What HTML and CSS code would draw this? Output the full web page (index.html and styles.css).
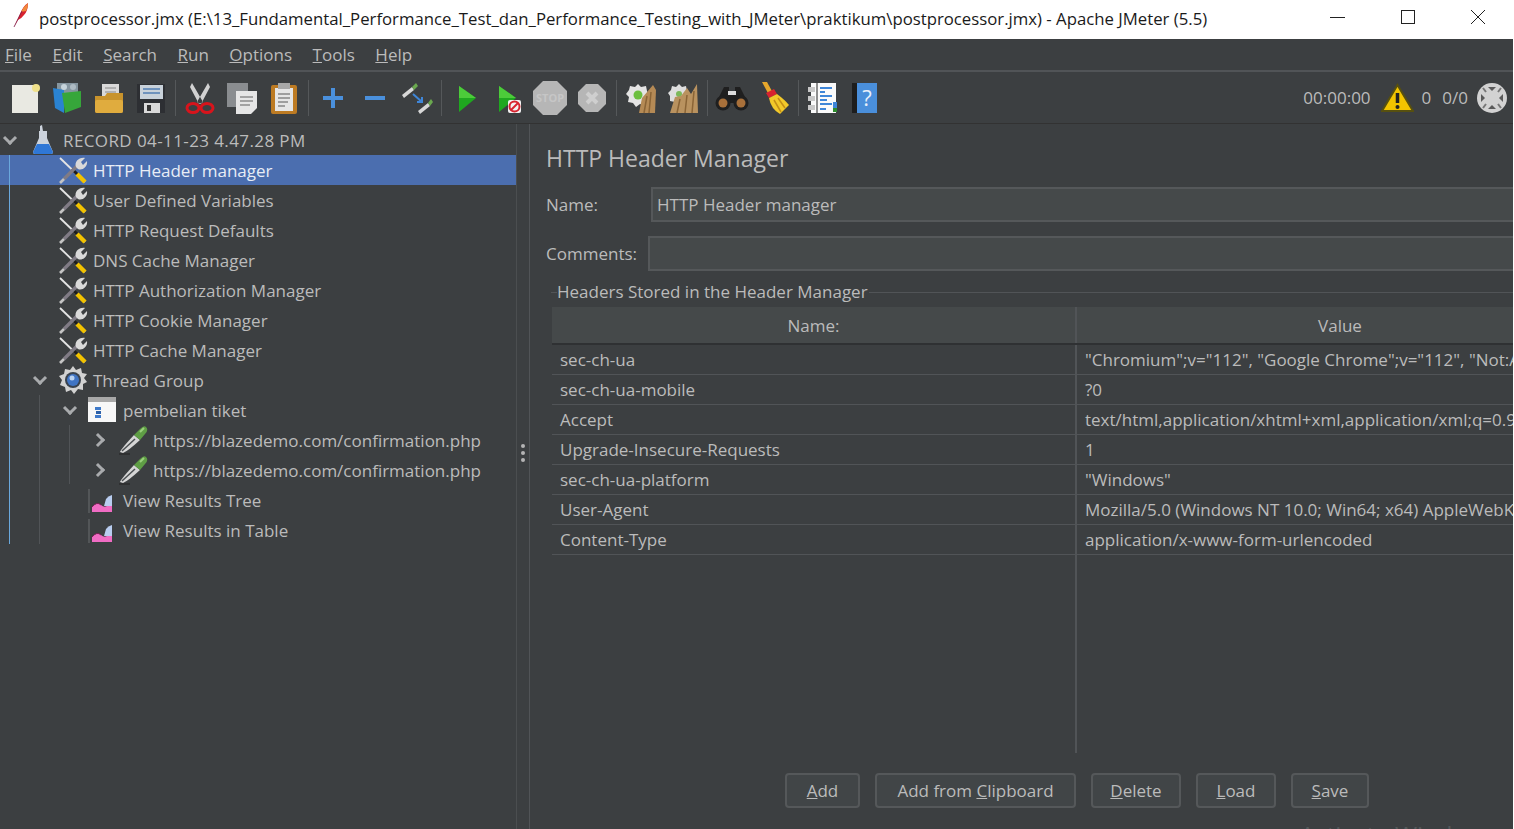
FILE: index.html
```html
<!DOCTYPE html>
<html lang="en">
<head>
  <meta charset="UTF-8" />
  <title>Apache JMeter (5.5)</title>
  <link rel="stylesheet" href="styles.css">
</head>
<body>
  <svg class="defs" width="0" height="0">
    <defs>
      <symbol id="i-tools" viewBox="0 0 30 30">
        <path d="M2 3 L27 27" stroke="#e4e4e4" stroke-width="1.800" fill="none"/>
        <path d="M14 14 L20 20" stroke="#1d1d1d" stroke-width="3" fill="none"/>
        <path d="M19 19 L27 27" stroke="#f2c200" stroke-width="4.500" fill="none"/>
        <path d="M6 24 L20 10" stroke="#807b85" stroke-width="3.400" fill="none"/>
        <path d="M2 28 L6 24" stroke="#c4c4c4" stroke-width="2.600" fill="none"/>
        <path d="M18 12 C16 7 21 2 27 3 L23 7 L25 10 L29 6 C30 12 24 16 20 14 Z" fill="#d9d9d9"/>
      </symbol>
      <symbol id="i-flask" viewBox="0 0 30 30">
        <path d="M12 1 L14 0 L15 6 L19 6 L19 13 L25 27 Q25 29 23 29 L7 29 Q5 29 5 27 L11 13 L11 6 L12 6 Z" fill="#ccd3dc"/>
        <path d="M9 19 L21 19 L25 27 Q25 29 23 29 L7 29 Q5 29 5 27 Z" fill="#2f77d6"/>
      </symbol>
      <symbol id="i-gear" viewBox="0 0 30 30">
        <path d="M15 1 L18 5 L23 3 L24 8 L29 9 L26 13 L29 17 L25 19 L25 25 L20 24 L16 29 L13 25 L8 27 L7 22 L2 20 L4 15 L1 11 L6 9 L7 4 L12 5 Z" fill="#d2d2d2"/>
        <circle cx="15" cy="15" r="8" fill="#39424e"/>
        <circle cx="15" cy="15" r="6" fill="#3f74c4"/>
        <circle cx="14" cy="13" r="2.500" fill="#b9d2f2"/>
      </symbol>
      <symbol id="i-fragment" viewBox="0 0 30 30">
        <rect x="0" y="2" width="28" height="25" fill="#f7f7f7"/>
        <rect x="0" y="2" width="28" height="5" fill="#a8a8a8"/>
        <rect x="7" y="12" width="6" height="3" fill="#3e79c9"/>
        <rect x="8" y="16" width="5" height="3" fill="#2b5fa8"/>
        <rect x="7" y="20" width="6" height="3" fill="#3e79c9"/>
      </symbol>
      <symbol id="i-pipette" viewBox="0 0 30 30">
        <path d="M2 27 Q3 24 16 10 L22 15 Q10 26 5 28 Z" fill="#d6d6d6"/>
        <path d="M4 26 L17 14" stroke="#4b4f52" stroke-width="1.500"/>
        <path d="M16 10 L22 4 Q26 0 28 2 Q31 5 27 9 L22 15 Z" fill="#5f9e45"/>
        <path d="M22 7 L26 3" stroke="#9bd07d" stroke-width="2"/>
        <path d="M1 29 L12 29" stroke="#222" stroke-width="1"/>
      </symbol>
      <symbol id="i-graph" viewBox="0 0 30 30">
        <path d="M1 4 L1 28" stroke="#6b6e70" stroke-width="1"/>
        <path d="M4 27 L4 22 Q9 16 13 20 Q16 23 19 21 L24 20 L24 27 Z" fill="#f06cc4"/>
        <path d="M16 21 L18 14 Q20 11 24 10 L24 21 Z" fill="#b9cdf0"/>
        <path d="M4 22 Q9 16 13 20" stroke="#7a1f55" stroke-width="1" fill="none"/>
      </symbol>
    </defs>
  </svg>

  <div class="app">
    <div class="titlebar">
      <svg class="feather" width="16" height="26" viewBox="0 0 16 26">
        <path d="M1 25 L7 12 Q10 4 15 1 Q15 9 11 13 Q8 17 5 18 Z" fill="#d8232f"/>
        <path d="M8 10 Q11 4 15 1 Q15 6 13 9 Z" fill="#f08a3c"/>
        <path d="M1 25 L9 9" stroke="#7a1a4a" stroke-width="0.800"/>
      </svg>
      <span class="title">postprocessor.jmx (E:\13_Fundamental_Performance_Test_dan_Performance_Testing_with_JMeter\praktikum\postprocessor.jmx) - Apache JMeter (5.5)</span>
      <div class="winbtns">
        <svg width="16" height="16" viewBox="0 0 16 16"><path d="M0 8.500 H15" stroke="#222" stroke-width="1"/></svg>
        <svg width="16" height="16" viewBox="0 0 16 16"><rect x="1.500" y="1.500" width="13" height="13" fill="none" stroke="#222"/></svg>
        <svg width="16" height="16" viewBox="0 0 16 16"><path d="M1 1 L15 15 M15 1 L1 15" stroke="#222" fill="none"/></svg>
      </div>
    </div>

    <nav class="menubar">
      <span><u>F</u>ile</span>
      <span><u>E</u>dit</span>
      <span><u>S</u>earch</span>
      <span><u>R</u>un</span>
      <span><u>O</u>ptions</span>
      <span><u>T</u>ools</span>
      <span><u>H</u>elp</span>
    </nav>

    <div class="toolbar">
      <div class="tool"><svg width="32" height="32" viewBox="0 0 32 32"><rect x="3" y="3" width="26" height="28" fill="#e9e9e2"/><circle cx="27" cy="6" r="4" fill="#efe08a"/></svg></div>
      <div class="tool"><svg width="32" height="32" viewBox="0 0 32 32"><rect x="6" y="1" width="21" height="13" fill="#85959f"/><path d="M2 6 L13 8 L13 31 L4 26 Z" fill="#2a83d2"/><path d="M11 11 L30 9 L30 25 L14 31 Z" fill="#36a63a"/><circle cx="13" cy="5" r="3" fill="#c6d3da"/><circle cx="22" cy="5" r="3" fill="#aebbc3"/></svg></div>
      <div class="tool"><svg width="32" height="32" viewBox="0 0 32 32"><rect x="9" y="2" width="17" height="16" fill="#d9d9d9"/><path d="M12 6 H23 M12 10 H23" stroke="#888"/><path d="M2 14 L12 14 L14 11 L30 11 L30 29 Q30 31 28 31 L4 31 Q2 31 2 29 Z" fill="#c8932c"/><rect x="2" y="18" width="28" height="13" rx="2" fill="#e0ac3e"/></svg></div>
      <div class="tool"><svg width="32" height="32" viewBox="0 0 32 32"><path d="M2 2 H30 V31 H2 Z" fill="#2d2f33"/><rect x="5" y="3" width="23" height="14" fill="#c9d2da"/><path d="M8 7 H25 M8 11 H25" stroke="#6f93bd" stroke-width="2"/><rect x="9" y="21" width="16" height="10" fill="#d9d9d9"/><rect x="12" y="23" width="4" height="6" fill="#333"/></svg></div>
      <i class="sep"></i>
      <div class="tool"><svg width="32" height="32" viewBox="0 0 32 32"><path d="M8 1 L19 20 L15 22 L6 5 Z M24 1 L13 20 L17 22 L26 5 Z" fill="#d2d2d2"/><ellipse cx="9" cy="26" rx="6" ry="4.500" fill="none" stroke="#d8141c" stroke-width="3"/><ellipse cx="23" cy="26" rx="6" ry="4.500" fill="none" stroke="#d8141c" stroke-width="3"/></svg></div>
      <div class="tool"><svg width="32" height="32" viewBox="0 0 32 32"><rect x="1" y="1" width="21" height="24" fill="#8a8d90"/><path d="M10 9 H31 V26 L25 32 H10 Z" fill="#e6e6e6"/><path d="M14 15 H27 M14 19 H27 M14 23 H24" stroke="#8d8d8d" stroke-width="1.500"/></svg></div>
      <div class="tool"><svg width="32" height="32" viewBox="0 0 32 32"><rect x="3" y="3" width="26" height="29" rx="2" fill="#bd7b23"/><rect x="7" y="6" width="18" height="23" fill="#e6e6e6"/><rect x="10" y="1" width="12" height="6" fill="#a8a8a8"/><path d="M10 12 H22 M10 16 H22 M10 20 H20 M10 24 H17" stroke="#888" stroke-width="1.500"/></svg></div>
      <i class="sep"></i>
      <div class="tool"><svg width="24" height="24" viewBox="0 0 24 24"><path d="M12 2 V22 M2 12 H22" stroke="#4a90dc" stroke-width="4"/></svg></div>
      <div class="tool"><svg width="24" height="24" viewBox="0 0 24 24"><path d="M2 12 H22" stroke="#4a90dc" stroke-width="4"/></svg></div>
      <div class="tool"><svg width="32" height="32" viewBox="0 0 32 32"><path d="M1 13 L11 5 L13 8 L3 16 Z" fill="#d8d8d8"/><path d="M11 5 L15 1 L17 4 L13 8 Z" fill="#6aa84f"/><path d="M17 29 L27 21 L29 24 L19 32 Z" fill="#d8d8d8"/><path d="M27 21 L30 17 L32 20 L29 24 Z" fill="#6aa84f"/><path d="M12 12 L21 20 M21 15 V20 H16" stroke="#3f86d8" stroke-width="2" fill="none"/></svg></div>
      <i class="sep"></i>
      <div class="tool"><svg width="32" height="32" viewBox="0 0 32 32"><path d="M9 4 L26 16 L9 30 Z" fill="#1fa81f"/><path d="M9 4 L26 16 L9 16 Z" fill="#4ccb3a"/></svg></div>
      <div class="tool"><svg width="32" height="32" viewBox="0 0 32 32"><path d="M7 4 L24 16 L7 30 Z" fill="#1fa81f"/><path d="M7 4 L24 16 L7 16 Z" fill="#4ccb3a"/><rect x="16" y="18" width="13" height="13" rx="2" fill="#f2f2f2"/><circle cx="22.500" cy="24.500" r="5" fill="none" stroke="#d8232f" stroke-width="2"/><path d="M19 28 L26 21" stroke="#d8232f" stroke-width="2"/></svg></div>
      <div class="tool"><svg class="stopsign" width="34" height="34" viewBox="0 0 34 34"><path d="M10 0 H24 L34 10 V24 L24 34 H10 L0 24 V10 Z" fill="#b6b6b6"/><text x="17" y="21" class="stoptext">STOP</text></svg></div>
      <div class="tool"><svg width="28" height="28" viewBox="0 0 28 28"><path d="M8 0 H20 L28 8 V20 L20 28 H8 L0 20 V8 Z" fill="#b6b6b6"/><path d="M9 9 L19 19 M19 9 L9 19" stroke="#cfcfcf" stroke-width="4"/></svg></div>
      <i class="sep"></i>
      <div class="tool"><svg width="32" height="32" viewBox="0 0 32 32"><path d="M13 2 L16 5 L21 4 L22 9 L24 14 L21 18 L20 23 L15 22 L11 25 L8 21 L3 20 L4 15 L1 12 L4 8 L5 4 L10 5 Z" fill="#e4e4e4"/><circle cx="13" cy="13" r="4.500" fill="#6cbf3f"/><path d="M14 31 L17 16 L28 3 L31 8 L30 31 Z" fill="#b58a55"/><path d="M19 31 L22 14 M24 31 L26 10" stroke="#8a6436" stroke-width="1.500"/></svg></div>
      <div class="tool"><svg width="32" height="32" viewBox="0 0 32 32"><path d="M12 2 L15 5 L19 4 L20 9 L22 13 L19 17 L8 20 L3 19 L3 14 L1 11 L4 8 L5 4 L9 5 Z" fill="#dedede"/><circle cx="12" cy="12" r="3" fill="#7cb85a"/><path d="M3 31 L8 15 L14 14 L20 6 L24 12 L30 2 L31 31 Z" fill="#b9925f"/><path d="M10 31 L13 17 M18 31 L20 13 M25 31 L27 9" stroke="#8a6436" stroke-width="1.500"/></svg></div>
      <i class="sep"></i>
      <div class="tool"><svg width="34" height="28" viewBox="0 0 34 28"><path d="M9 3 H14 V10 H20 V3 H25 L33 19 H1 Z" fill="#1f1f1f"/><circle cx="8" cy="19" r="7.500" fill="#1f1f1f"/><circle cx="26" cy="19" r="7.500" fill="#1f1f1f"/><circle cx="8" cy="19" r="4.500" fill="#a8703a"/><circle cx="26" cy="19" r="4.500" fill="#a8703a"/><rect x="13" y="7" width="8" height="4" fill="#ddd"/></svg></div>
      <div class="tool"><svg width="32" height="34" viewBox="0 0 32 34"><path d="M4 1 L9 1 L15 12 L11 14 Z" fill="#e6a72c"/><path d="M8 12 L16 8 L19 13 L11 17 Z" fill="#d8232f"/><path d="M11 17 L19 13 Q27 19 31 24 L22 33 Q13 28 11 17 Z" fill="#f2c92a"/><path d="M16 19 L23 31 M20 17 L27 27" stroke="#c48f16" stroke-width="1.500"/></svg></div>
      <i class="sep"></i>
      <div class="tool"><svg width="32" height="32" viewBox="0 0 32 32"><rect x="4" y="1" width="25" height="30" fill="#fafafa"/><rect x="26" y="20" width="4" height="6" fill="#3f86d8"/><rect x="26" y="26" width="4" height="4" fill="#2e8c2e"/><path d="M10 1 V31" stroke="#222"/><path d="M13 6 H25 M13 10 H18 M13 14 H25 M13 18 H20 M13 22 H25 M13 27 H19" stroke="#3f86d8" stroke-width="2"/><rect x="1" y="5" width="7" height="5" fill="#c8c8c8"/><rect x="1" y="14" width="7" height="5" fill="#c8c8c8"/><rect x="1" y="23" width="7" height="5" fill="#c8c8c8"/></svg></div>
      <div class="tool"><svg class="helpbook" width="26" height="32" viewBox="0 0 26 32"><rect x="0" y="1" width="6" height="30" fill="#1d1d1d"/><rect x="5" y="1" width="20" height="30" fill="#4a8fdb"/><text x="15" y="24" class="helptext">?</text></svg></div>
      <div class="status">
        <span class="timer">00:00:00</span>
        <svg class="warn" width="33" height="30" viewBox="0 0 33 30"><path d="M16.500 2 L32 28 H1 Z" fill="#f2c400" stroke="#57500f" stroke-width="2"/><path d="M16.500 10 V20" stroke="#222" stroke-width="3.500"/><circle cx="16.500" cy="24" r="2" fill="#222"/></svg>
        <span class="warncount">0</span>
        <span class="threads">0/0</span>
        <svg class="lf" width="32" height="32" viewBox="0 0 32 32"><circle cx="16" cy="16" r="15" fill="#d2d2d2"/><path d="M16 9 L12 5 H20 Z M16 23 L12 27 H20 Z M9 16 L5 12 V20 Z M23 16 L27 12 V20 Z" fill="#5a5a5a"/><path d="M10 10 L7 6 M22 10 L25 6 M10 22 L7 26 M22 22 L25 26" stroke="#777" stroke-width="2"/></svg>
      </div>
    </div>

    <main class="main">
      <aside class="tree">
        <i class="guide guide-root"></i>
        <i class="guide guide-thread"></i>
        <i class="guide guide-frag"></i>
        <div class="row"><b class="arrow open"></b><svg class="nodeicon"><use href="#i-flask"/></svg><span class="plan-name">RECORD 04-11-23 4.47.28 PM</span></div>
        <div class="row lv1 selected"><b class="arrow none"></b><svg class="nodeicon"><use href="#i-tools"/></svg><span>HTTP Header manager</span></div>
        <div class="row lv1"><b class="arrow none"></b><svg class="nodeicon"><use href="#i-tools"/></svg><span>User Defined Variables</span></div>
        <div class="row lv1"><b class="arrow none"></b><svg class="nodeicon"><use href="#i-tools"/></svg><span>HTTP Request Defaults</span></div>
        <div class="row lv1"><b class="arrow none"></b><svg class="nodeicon"><use href="#i-tools"/></svg><span>DNS Cache Manager</span></div>
        <div class="row lv1"><b class="arrow none"></b><svg class="nodeicon"><use href="#i-tools"/></svg><span>HTTP Authorization Manager</span></div>
        <div class="row lv1"><b class="arrow none"></b><svg class="nodeicon"><use href="#i-tools"/></svg><span>HTTP Cookie Manager</span></div>
        <div class="row lv1"><b class="arrow none"></b><svg class="nodeicon"><use href="#i-tools"/></svg><span>HTTP Cache Manager</span></div>
        <div class="row lv1"><b class="arrow open"></b><svg class="nodeicon"><use href="#i-gear"/></svg><span>Thread Group</span></div>
        <div class="row lv2"><b class="arrow open"></b><svg class="nodeicon"><use href="#i-fragment"/></svg><span>pembelian tiket</span></div>
        <div class="row lv3"><b class="arrow closed"></b><svg class="nodeicon"><use href="#i-pipette"/></svg><span>https://blazedemo.com/confirmation.php</span></div>
        <div class="row lv3"><b class="arrow closed"></b><svg class="nodeicon"><use href="#i-pipette"/></svg><span>https://blazedemo.com/confirmation.php</span></div>
        <div class="row lv2"><b class="arrow none"></b><svg class="nodeicon"><use href="#i-graph"/></svg><span>View Results Tree</span></div>
        <div class="row lv2"><b class="arrow none"></b><svg class="nodeicon"><use href="#i-graph"/></svg><span>View Results in Table</span></div>
      </aside>

      <div class="divider"><i></i><i></i><i></i></div>

      <section class="panel">
        <h2>HTTP Header Manager</h2>
        <div class="field name-field">
          <label>Name:</label>
          <div class="input">HTTP Header manager</div>
        </div>
        <div class="field comments-field">
          <label>Comments:</label>
          <div class="input"></div>
        </div>
        <div class="legend"><span>Headers Stored in the Header Manager</span></div>
        <div class="table">
          <div class="thead">
            <div class="cell-name">Name:</div>
            <div class="cell-value">Value</div>
          </div>
          <div class="trow"><div class="cell-name">sec-ch-ua</div><div class="cell-value">"Chromium";v="112", "Google Chrome";v="112", "Not:A-Brand";v="99"</div></div>
          <div class="trow"><div class="cell-name">sec-ch-ua-mobile</div><div class="cell-value">?0</div></div>
          <div class="trow"><div class="cell-name">Accept</div><div class="cell-value">text/html,application/xhtml+xml,application/xml;q=0.9,image/avif,image/webp</div></div>
          <div class="trow"><div class="cell-name">Upgrade-Insecure-Requests</div><div class="cell-value">1</div></div>
          <div class="trow"><div class="cell-name">sec-ch-ua-platform</div><div class="cell-value">"Windows"</div></div>
          <div class="trow"><div class="cell-name">User-Agent</div><div class="cell-value">Mozilla/5.0 (Windows NT 10.0; Win64; x64) AppleWebKit/537.36 (KHTML, like Gecko)</div></div>
          <div class="trow"><div class="cell-name">Content-Type</div><div class="cell-value">application/x-www-form-urlencoded</div></div>
          <div class="tfill"><div class="cell-name"></div><div class="cell-value"></div></div>
        </div>
        <div class="buttons">
          <button class="btn btn-add"><u>A</u>dd</button>
          <button class="btn btn-clip">Add from <u>C</u>lipboard</button>
          <button class="btn btn-del"><u>D</u>elete</button>
          <button class="btn btn-load"><u>L</u>oad</button>
          <button class="btn btn-save"><u>S</u>ave</button>
        </div>
        <div class="watermark">Activate Windows</div>
      </section>
    </main>
  </div>
</body>
</html>
```

FILE: styles.css
```css
/* JMeter window, darcula look */
html, body {
  margin: 0;
  padding: 0;
  height: 100%;
  overflow: hidden;
  background: #fff;
}
.defs {
  display: block;
  height: 0;
}
.app {
  width: 1513px;
  height: 829px;
  display: flex;
  flex-direction: column;
  background: #3c3f41;
  color: #bbbbbb;
  font-family: "Open Sans", "Noto Sans", sans-serif;
  font-size: 17px;
  overflow: hidden;
}

/* title bar */
.titlebar {
  height: 39px;
  flex: none;
  display: flex;
  align-items: center;
  background: #fff;
  color: #1a1a1a;
  padding: 0 0 3px 13px;
  box-sizing: border-box;
  font-size: 16.750px;
}
.feather {
  flex: none;
  margin-right: 10px;
  margin-top: -6px;
}
.title {
  white-space: nowrap;
}
.winbtns {
  margin-left: auto;
  display: flex;
  gap: 54px;
  padding-right: 27px;
  margin-top: -3px;
}

/* menu */
.menubar {
  height: 33px;
  flex: none;
  display: flex;
  align-items: center;
  gap: 20.500px;
  padding-left: 5px;
  border-bottom: 2px solid #515457;
  box-sizing: border-box;
}

/* toolbar */
.toolbar {
  height: 52px;
  flex: none;
  display: flex;
  align-items: center;
  padding-left: 4px;
  border-bottom: 1px solid #323232;
  box-sizing: border-box;
}
.tool {
  width: 42px;
  height: 42px;
  display: flex;
  align-items: center;
  justify-content: center;
  flex: none;
}
.sep {
  width: 1px;
  height: 36px;
  margin: 0 3px 0 3px;
  background: #55585a;
  flex: none;
}
.stopsign, .helpbook {
  overflow: visible;
}
.stoptext {
  font-size: 11px;
  font-weight: 700;
  fill: #c6c6c6;
  text-anchor: middle;
}
.helptext {
  font-size: 22px;
  fill: #e8f0fa;
  text-anchor: middle;
}
.status {
  margin-left: auto;
  display: flex;
  align-items: center;
  padding-right: 5px;
}
.warn {
  margin-left: 10px;
}
.warncount {
  margin-left: 8px;
}
.threads {
  margin-left: 11px;
}
.lf {
  margin-left: 8px;
}

/* layout of the two sides */
.main {
  flex: 1;
  min-height: 0;
  display: flex;
}

/* tree */
.tree {
  width: 516px;
  flex: none;
  position: relative;
  padding-top: 1px;
  box-sizing: border-box;
}
.guide {
  position: absolute;
  width: 1px;
  z-index: 1;
}
.guide-root {
  left: 9px;
  top: 31px;
  height: 389px;
  background: #6aa8dc;
}
.guide-thread {
  left: 39px;
  top: 271px;
  height: 149px;
  background: #515457;
}
.guide-frag {
  left: 69px;
  top: 301px;
  height: 59px;
  background: #515457;
}
.row {
  height: 30px;
  display: flex;
  align-items: center;
  white-space: nowrap;
}
.row.lv1 { padding-left: 30px; }
.row.lv2 { padding-left: 60px; }
.row.lv3 { padding-left: 90px; }
.row.selected {
  background: #4b6eaf;
  color: #e8edf6;
}
.plan-name {
  letter-spacing: 0.400px;
}
.arrow {
  width: 20px;
  height: 20px;
  flex: none;
  position: relative;
  margin-right: 8px;
}
.arrow::after {
  content: "";
  position: absolute;
  width: 7px;
  height: 7px;
  border-right: 3px solid #a9abad;
  border-bottom: 3px solid #a9abad;
  left: 5px;
  top: 3px;
  transform: rotate(45deg);
}
.arrow.closed::after {
  left: 3px;
  top: 5px;
  transform: rotate(-45deg);
}
.arrow.none::after {
  display: none;
}
.nodeicon {
  width: 30px;
  height: 30px;
  flex: none;
  margin-right: 5px;
}

/* sash */
.divider {
  width: 13px;
  flex: none;
  border-left: 1px solid #4b4e50;
  display: flex;
  flex-direction: column;
  align-items: center;
  justify-content: center;
  gap: 3px;
  padding-bottom: 48px;
  box-sizing: border-box;
}
.divider i {
  width: 4px;
  height: 4px;
  border-radius: 50%;
  background: #b4b4b4;
}

/* right panel */
.panel {
  flex: 1;
  min-width: 0;
  border-left: 1px solid #515457;
  padding-left: 16px;
  position: relative;
  overflow: hidden;
}
.panel h2 {
  margin: 18px 0 0;
  font-size: 23px;
  font-weight: 400;
  line-height: 32px;
  height: 32px;
}
.field {
  display: flex;
  align-items: center;
}
.name-field {
  margin-top: 13px;
}
.comments-field {
  margin-top: 14px;
}
.field label {
  flex: none;
}
.name-field label {
  width: 105px;
}
.comments-field label {
  width: 102px;
}
.input {
  flex: 1;
  height: 35px;
  box-sizing: border-box;
  border: 2px solid #55585a;
  border-right: none;
  background: #45494a;
  padding-left: 4px;
  line-height: 31px;
}
.legend {
  margin: 11px 0 0 5px;
  height: 20px;
  line-height: 20px;
  position: relative;
  white-space: nowrap;
  padding-left: 6px;
}
.legend::before {
  content: "";
  position: absolute;
  left: 0;
  right: 0;
  top: 10px;
  border-top: 1px solid #515457;
}
.legend span {
  position: relative;
  background: #3c3f41;
  padding-right: 1px;
}
.table {
  margin: 5px 0 0 6px;
}
.thead, .trow, .tfill {
  display: flex;
}
.cell-name {
  width: 525px;
  flex: none;
  box-sizing: border-box;
  border-right: 2px solid #515457;
  padding-left: 8px;
}
.cell-value {
  flex: 1;
  min-width: 0;
  white-space: nowrap;
  overflow: hidden;
  padding-left: 8px;
}
.thead {
  height: 38px;
  line-height: 38px;
  background: #45494a;
  border-bottom: 2px solid #2f3133;
  box-sizing: border-box;
  text-align: center;
}
.thead .cell-name {
  padding: 0;
}
.thead .cell-value {
  flex: none;
  width: 526px;
  padding: 0;
}
.trow {
  height: 30px;
  line-height: 29px;
  box-sizing: border-box;
  border-bottom: 1px solid #515457;
}
.tfill {
  height: 198px;
}
.buttons {
  display: flex;
  margin: 20px 0 0 239px;
  gap: 15px;
}
.btn {
  height: 35px;
  padding: 0;
  box-sizing: border-box;
  border: 2px solid #55585a;
  border-radius: 4px;
  background: #414547;
  color: #bbbbbb;
  font: inherit;
  flex: none;
}
.btn-add { width: 75px; }
.btn-clip { width: 201px; }
.btn-del { width: 90px; }
.btn-load { width: 80px; }
.btn-save { width: 78px; }
.watermark {
  position: absolute;
  left: 770px;
  top: 694px;
  font-size: 24px;
  color: #54585a;
  white-space: nowrap;
}
```
